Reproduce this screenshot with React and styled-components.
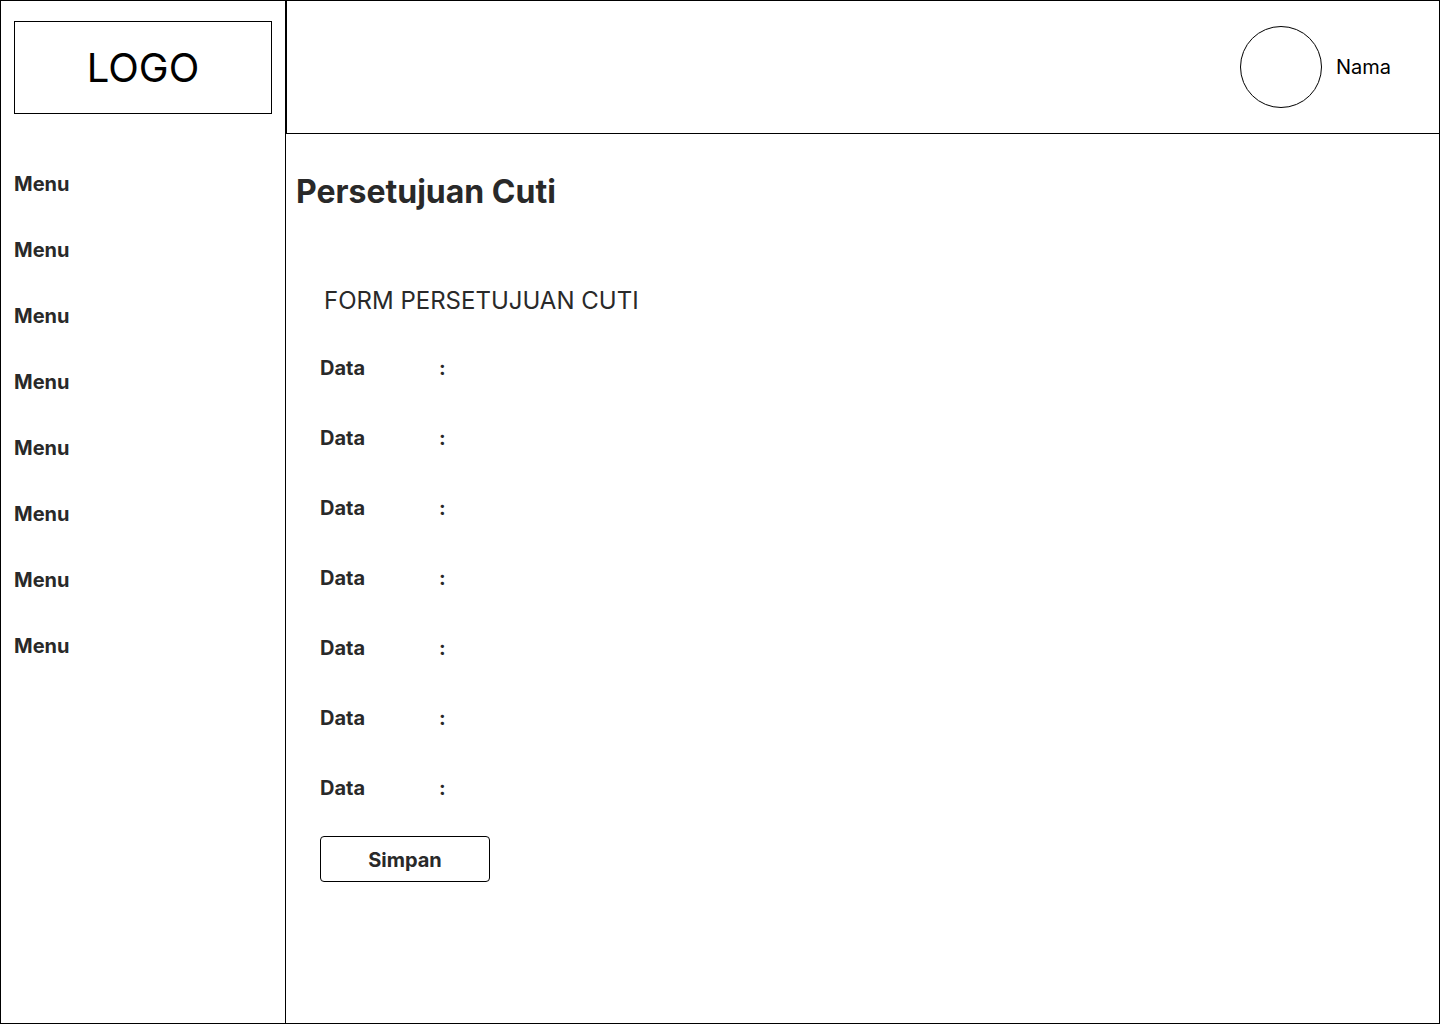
import React from "react";
import styled, { createGlobalStyle } from "styled-components";

const GlobalStyle = createGlobalStyle`
  *, *::before, *::after { box-sizing: border-box; }
  body {
    margin: 0;
    background: #fff;
    color: #292929;
    font-family: Inter, "Liberation Sans", sans-serif;
    font-size: 20px;
    line-height: 24px;
  }
`;

const Page = styled.div`
  display: grid;
  grid-template-columns: 286px 1fr;
  min-height: 100vh;
  border: 1px solid #000;
  border-left: 0;
`;

const Sidebar = styled.aside`
  border: 1px solid #000;
  border-width: 0 1px;
  padding: 20px 13px;
`;

const Logo = styled.div`
  display: flex;
  align-items: center;
  justify-content: center;
  height: 93px;
  border: 1px solid #000;
  color: #000;
  font-size: 40px;
  line-height: 48px;
`;

const Menu = styled.nav`
  display: flex;
  flex-direction: column;
  align-items: flex-start;
  gap: 42px;
  padding-top: 58px;
`;

const MenuLink = styled.a`
  color: inherit;
  font-weight: 700;
  text-decoration: none;
`;

const Header = styled.header`
  display: flex;
  align-items: center;
  justify-content: flex-end;
  gap: 14px;
  height: 133px;
  padding: 0 48px;
  border: 1px solid #000;
  border-width: 0 0 1px 1px;
  color: #000;
`;

const Avatar = styled.div`
  width: 82px;
  height: 82px;
  border: 1px solid #000;
  border-radius: 50%;
`;

const Content = styled.main`
  padding: 38px 10px;
`;

const Title = styled.h1`
  margin: 0;
  font-size: 32px;
  line-height: 40px;
  font-weight: 700;
`;

const Form = styled.form`
  padding: 73px 24px 0;
`;

const FormTitle = styled.h2`
  margin: 0 0 39px;
  padding-left: 4px;
  font-size: 24px;
  line-height: 32px;
  font-weight: 400;
`;

const Fields = styled.dl`
  display: grid;
  grid-template-columns: 119px 1fr;
  row-gap: 46px;
  margin: 0;
  font-weight: 700;
`;

const Value = styled.dd`
  margin: 0;
`;

const SaveButton = styled.button`
  width: 170px;
  height: 46px;
  margin-top: 36px;
  padding: 2px 0 0;
  border: 1px solid #000;
  border-radius: 4px;
  background: #fff;
  color: inherit;
  font: inherit;
  font-weight: 700;
`;

const menuItems = Array.from({ length: 8 }, () => "Menu");
const fields = Array.from({ length: 7 }, () => "Data");

export default function App() {
  return (
    <>
      <GlobalStyle />
      <Page>
        <Sidebar>
          <Logo>LOGO</Logo>
          <Menu>
            {menuItems.map((item, i) => (
              <MenuLink href="#" key={i}>{item}</MenuLink>
            ))}
          </Menu>
        </Sidebar>
        <div>
          <Header>
            <Avatar />
            <span>Nama</span>
          </Header>
          <Content>
            <Title>Persetujuan Cuti</Title>
            <Form onSubmit={(e) => e.preventDefault()}>
              <FormTitle>FORM PERSETUJUAN CUTI</FormTitle>
              <Fields>
                {fields.map((label, i) => (
                  <React.Fragment key={i}>
                    <dt>{label}</dt>
                    <Value>:</Value>
                  </React.Fragment>
                ))}
              </Fields>
              <SaveButton type="submit">Simpan</SaveButton>
            </Form>
          </Content>
        </div>
      </Page>
    </>
  );
}
